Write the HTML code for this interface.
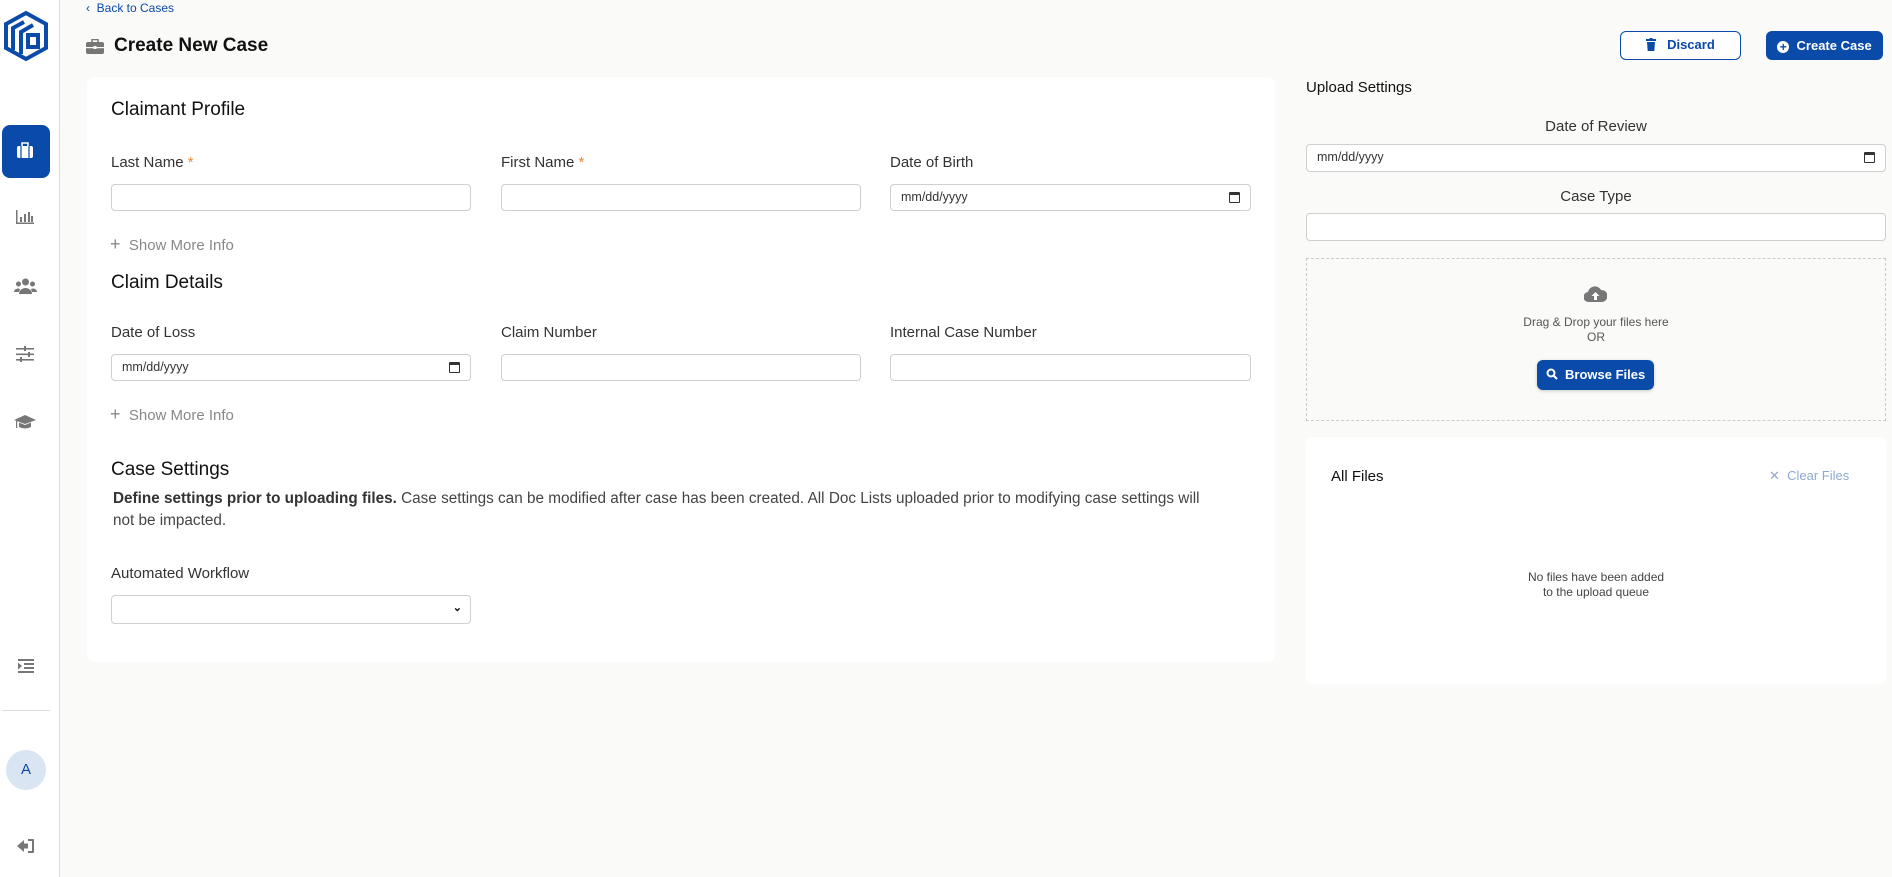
<!DOCTYPE html>
<html><head><meta charset="utf-8"><style>
*{box-sizing:border-box;margin:0;padding:0}
body{width:1892px;height:877px;background:#fafaf9;font-family:"Liberation Sans",sans-serif;color:#222;position:relative;overflow:hidden}
.abs{position:absolute}
.side{left:0;top:0;width:60px;height:877px;background:#fff;border-right:1px solid #ddd}
.lbl{font-size:15px;color:#333}
.inp{position:absolute;height:27px;border:1px solid #cfcfcf;border-radius:4px;background:#fff;font-size:12.5px;color:#333;padding:0 10px;line-height:25px}
.h2{font-size:19px;color:#111}
.more{font-size:15px;color:#888}
.cal{position:absolute;right:10px;top:7px;width:11px;height:11px;border:1.5px solid #333;border-top-width:3px;border-radius:1px}
.btn{position:absolute;border-radius:6px;font-size:13px;font-weight:bold;text-align:center}
</style></head><body>
<div class="abs side"></div>
<svg class="abs" style="left:2px;top:10px" width="48" height="52" viewBox="0 0 48 52" fill="none" stroke="#0a4aa8" stroke-width="4">
<path d="M24 3 L44 14 L44 38 L24 49 L4 38 L4 14 Z"/><path d="M11 40 V18 L22 12"/><path d="M19 44 V22 L31 15"/><rect x="26" y="25" width="10" height="12"/></svg>
<div class="abs" style="left:2px;top:125px;width:48px;height:53px;background:#0a4aa8;border-radius:8px"></div>
<svg class="abs" style="left:16px;top:142px" width="18" height="18" viewBox="0 0 18 18"><rect x="1" y="4" width="16" height="12" rx="2" fill="#fff"/><rect x="6" y="1" width="6" height="4" fill="none" stroke="#fff" stroke-width="1.5"/><path d="M5 4V16M13 4V16" stroke="#0a4aa8" stroke-width="1.2"/></svg>
<svg class="abs" style="left:15px;top:209px" width="20" height="16" viewBox="0 0 20 16" fill="#777"><rect x="1" y="1" width="1.5" height="14"/><rect x="1" y="13.5" width="18" height="1.5"/><rect x="5" y="8" width="2" height="5"/><rect x="9" y="5" width="2" height="8"/><rect x="13" y="3" width="2" height="10"/><rect x="16" y="7" width="2" height="6"/></svg>
<svg class="abs" style="left:14px;top:278px" width="23" height="16" viewBox="0 0 23 16" fill="#777"><circle cx="11.5" cy="4" r="3.5"/><circle cx="4.5" cy="6" r="2.5"/><circle cx="18.5" cy="6" r="2.5"/><path d="M5 16a6.5 6 0 0 1 13 0Z"/><path d="M0 14a4 3.5 0 0 1 6-3L5 14Z"/><path d="M23 14a4 3.5 0 0 0-6-3L18 14Z"/></svg>
<svg class="abs" style="left:15px;top:346px" width="20" height="16" viewBox="0 0 20 16" fill="#777"><rect x="1" y="2" width="18" height="1.6"/><rect x="1" y="7.5" width="18" height="1.6"/><rect x="1" y="13" width="18" height="1.6"/><rect x="9" y="0" width="2" height="5"/><rect x="13" y="6" width="2" height="5"/><rect x="5" y="11" width="2" height="5"/></svg>
<svg class="abs" style="left:13px;top:414px" width="24" height="16" viewBox="0 0 24 16" fill="#777"><path d="M12 1L23 6L12 10L1 6Z"/><path d="M6 8.5V13Q12 16 18 13V8.5L12 11Z"/><rect x="3" y="7" width="1.2" height="7"/></svg>
<svg class="abs" style="left:17px;top:658px" width="18" height="16" viewBox="0 0 18 16" fill="#777"><rect x="1" y="1" width="16" height="2"/><rect x="7" y="5" width="10" height="2"/><rect x="7" y="9" width="10" height="2"/><rect x="1" y="13" width="16" height="2"/><path d="M1 4.5L5 8L1 11.5Z"/></svg>
<div class="abs" style="left:2px;top:710px;width:48px;height:1px;background:#ddd"></div>
<div class="abs" style="left:6px;top:750px;width:40px;height:40px;border-radius:50%;background:#d9e5f2;color:#0a4aa8;font-size:15px;text-align:center;line-height:40px">A</div>
<svg class="abs" style="left:17px;top:838px" width="18" height="16" viewBox="0 0 18 16" fill="#777"><path d="M0 8L7 2V5.5H11V10.5H7V14Z"/><path d="M11 1H16Q17 1 17 2V14Q17 15 16 15H11V13H15V3H11Z"/></svg>

<div class="abs" style="left:86px;top:1px;font-size:12px;color:#0a4aa8">&#8249;&nbsp;&nbsp;Back to Cases</div>
<svg class="abs" style="left:86px;top:39px" width="18" height="15" viewBox="0 0 18 15" fill="#777"><rect x="0" y="3" width="18" height="12" rx="2"/><rect x="6" y="0.5" width="6" height="3.5" fill="none" stroke="#777" stroke-width="1.5"/><rect x="0" y="8" width="18" height="1.2" fill="#fafaf9"/><rect x="7.5" y="7" width="3" height="3" fill="#fafaf9"/></svg>
<div class="abs" style="left:114px;top:35px;font-size:19px;font-weight:bold;color:#111">Create New Case</div>

<div class="btn" style="left:1620px;top:31px;width:121px;height:29px;border:1.5px solid #0a4aa8;background:#fff;color:#0a4aa8;line-height:26px"><svg width="10" height="13" viewBox="0 0 10 13" style="vertical-align:-2px" fill="#0a4aa8"><rect x="0" y="1" width="10" height="2"/><rect x="3.5" y="0" width="3" height="2"/><path d="M1 4H9L8.3 13H1.7Z"/></svg>&nbsp;&nbsp; Discard</div>
<div class="btn" style="left:1766px;top:31px;width:117px;height:29px;background:#0a4aa8;color:#fff;line-height:29px"><span style="display:inline-block;width:12px;height:12px;border-radius:50%;background:#fff;color:#0a4aa8;font-size:12px;line-height:12px;vertical-align:-1px">+</span>&nbsp; Create Case</div>

<div class="abs" style="left:87px;top:77px;width:1188px;height:585px;background:#fff;border-radius:8px"></div>
<div class="abs h2" style="left:111px;top:99px">Claimant Profile</div>
<div class="abs lbl" style="left:111px;top:154px">Last Name <span style="color:#e8893a">*</span></div>
<div class="abs lbl" style="left:501px;top:154px">First Name <span style="color:#e8893a">*</span></div>
<div class="abs lbl" style="left:890px;top:154px">Date of Birth</div>
<div class="inp" style="left:111px;top:184px;width:360px"></div>
<div class="inp" style="left:501px;top:184px;width:360px"></div>
<div class="inp" style="left:890px;top:184px;width:361px">mm/dd/yyyy<span class="cal"></span></div>
<div class="abs more" style="left:110px;top:234px"><span style="font-size:18px">+</span>&nbsp;&nbsp;Show More Info</div>
<div class="abs h2" style="left:111px;top:272px">Claim Details</div>
<div class="abs lbl" style="left:111px;top:324px">Date of Loss</div>
<div class="abs lbl" style="left:501px;top:324px">Claim Number</div>
<div class="abs lbl" style="left:890px;top:324px">Internal Case Number</div>
<div class="inp" style="left:111px;top:354px;width:360px">mm/dd/yyyy<span class="cal"></span></div>
<div class="inp" style="left:501px;top:354px;width:360px"></div>
<div class="inp" style="left:890px;top:354px;width:361px"></div>
<div class="abs more" style="left:110px;top:404px"><span style="font-size:18px">+</span>&nbsp;&nbsp;Show More Info</div>
<div class="abs h2" style="left:111px;top:459px">Case Settings</div>
<div class="abs" style="left:113px;top:488px;width:1160px;font-size:15.3px;line-height:22px;color:#444"><b style="color:#333">Define settings prior to uploading files.</b> Case settings can be modified after case has been created. All Doc Lists uploaded prior to modifying case settings will<br>not be impacted.</div>
<div class="abs lbl" style="left:111px;top:565px">Automated Workflow</div>
<div class="inp" style="left:111px;top:595px;width:360px;height:29px"><span style="position:absolute;right:8px;top:0;font-size:11px;font-weight:bold;color:#111">&#8964;</span></div>

<div class="abs" style="left:1306px;top:79px;font-size:15px;color:#111">Upload Settings</div>
<div class="abs lbl" style="left:1306px;top:118px;width:580px;text-align:center">Date of Review</div>
<div class="inp" style="left:1306px;top:144px;width:580px;height:28px">mm/dd/yyyy<span class="cal"></span></div>
<div class="abs lbl" style="left:1306px;top:188px;width:580px;text-align:center">Case Type</div>
<div class="inp" style="left:1306px;top:213px;width:580px;height:28px"></div>
<div class="abs" style="left:1306px;top:258px;width:580px;height:163px;border:1px dashed #ccc"></div>
<svg class="abs" style="left:1584px;top:285px" width="23" height="18" viewBox="0 0 23 18"><path d="M5 17A5 5 0 0 1 4 7A7 7 0 0 1 17 5A6 6 0 0 1 18 17Z" fill="#777"/><path d="M11.5 7L7.5 11H10V15H13V11H15.5Z" fill="#fff"/></svg>
<div class="abs" style="left:1306px;top:315px;width:580px;text-align:center;font-size:12px;line-height:15px;color:#555">Drag &amp; Drop your files here<br>OR</div>
<div class="btn" style="left:1537px;top:360px;width:117px;height:30px;background:#0a4aa8;color:#fff;line-height:30px;box-shadow:0 1px 3px rgba(0,0,0,.2)"><svg width="12" height="12" viewBox="0 0 12 12" style="vertical-align:-1px" fill="none" stroke="#fff" stroke-width="2"><circle cx="5" cy="5" r="3.5"/><path d="M7.5 7.5L11 11"/></svg>&nbsp; Browse Files</div>
<div class="abs" style="left:1306px;top:437px;width:580px;height:247px;background:#fff;border-radius:6px"></div>
<div class="abs" style="left:1331px;top:468px;font-size:15px;color:#111">All Files</div>
<div class="abs" style="left:1769px;top:468px;font-size:13px;color:#8fa8cf">&#10005;&nbsp; Clear Files</div>
<div class="abs" style="left:1306px;top:570px;width:580px;text-align:center;font-size:12px;line-height:15px;color:#444">No files have been added<br>to the upload queue</div>
</body></html>
